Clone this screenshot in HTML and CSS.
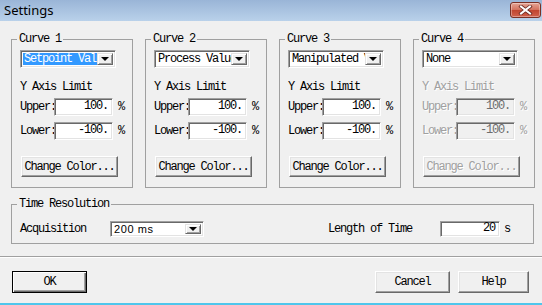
FILE: index.html
```html
<!DOCTYPE html>
<html lang="en">
<head>
  <meta charset="UTF-8" />
  <title>Settings</title>
  <link rel="stylesheet" href="styles.css">
</head>
<body>
  <div class="window">
    <div class="titlebar">
      <span class="title">Settings</span>
      <button class="close-btn" aria-label="Close">
        <svg width="15" height="10" viewBox="0 0 15 10">
          <path d="M3 1.5 L12 8.5 M12 1.5 L3 8.5" stroke="#6b2a22" stroke-width="3.6" stroke-linecap="square"/>
          <path d="M3 1.5 L12 8.5 M12 1.5 L3 8.5" stroke="#fff" stroke-width="2" stroke-linecap="square"/>
        </svg>
      </button>
    </div>

    <div class="content">
      <div class="curves">
        <fieldset class="group curve">
          <legend>Curve 1</legend>
          <div class="combo"><span class="combo-text selected">Setpoint Value</span><span class="combo-arrow"></span></div>
          <div class="axis-title">Y Axis Limit</div>
          <div class="limit-row"><span class="limit-label">Upper:</span><span class="edit">100.</span><span class="unit">%</span></div>
          <div class="limit-row lower"><span class="limit-label">Lower:</span><span class="edit">-100.</span><span class="unit">%</span></div>
          <button class="btn color-btn">Change Color...</button>
        </fieldset>

        <fieldset class="group curve">
          <legend>Curve 2</legend>
          <div class="combo"><span class="combo-text">Process Value</span><span class="combo-arrow"></span></div>
          <div class="axis-title">Y Axis Limit</div>
          <div class="limit-row"><span class="limit-label">Upper:</span><span class="edit">100.</span><span class="unit">%</span></div>
          <div class="limit-row lower"><span class="limit-label">Lower:</span><span class="edit">-100.</span><span class="unit">%</span></div>
          <button class="btn color-btn">Change Color...</button>
        </fieldset>

        <fieldset class="group curve">
          <legend>Curve 3</legend>
          <div class="combo"><span class="combo-text">Manipulated Value</span><span class="combo-arrow"></span></div>
          <div class="axis-title">Y Axis Limit</div>
          <div class="limit-row"><span class="limit-label">Upper:</span><span class="edit">100.</span><span class="unit">%</span></div>
          <div class="limit-row lower"><span class="limit-label">Lower:</span><span class="edit">-100.</span><span class="unit">%</span></div>
          <button class="btn color-btn">Change Color...</button>
        </fieldset>

        <fieldset class="group curve disabled">
          <legend>Curve 4</legend>
          <div class="combo"><span class="combo-text">None</span><span class="combo-arrow"></span></div>
          <div class="axis-title">Y Axis Limit</div>
          <div class="limit-row"><span class="limit-label">Upper:</span><span class="edit">100.</span><span class="unit">%</span></div>
          <div class="limit-row lower"><span class="limit-label">Lower:</span><span class="edit">-100.</span><span class="unit">%</span></div>
          <button class="btn color-btn" disabled>Change Color...</button>
        </fieldset>
      </div>

      <fieldset class="group time">
        <legend>Time Resolution</legend>
        <div class="time-row">
          <span class="time-label">Acquisition</span>
          <div class="combo small"><span class="combo-text sans">200 ms</span><span class="combo-arrow"></span></div>
          <span class="time-label length">Length of Time</span>
          <span class="edit small">20</span>
          <span class="unit">s</span>
        </div>
      </fieldset>
    </div>

    <div class="separator"></div>

    <div class="footer">
      <button class="btn default">OK</button>
      <button class="btn cancel">Cancel</button>
      <button class="btn help">Help</button>
    </div>
  </div>
</body>
</html>
```

FILE: styles.css
```css
* {
  margin: 0;
  padding: 0;
  box-sizing: border-box;
}

body {
  width: 542px;
  height: 305px;
  overflow: hidden;
  background: #f0f0f0;
  color: #000;
  font: 12px "Liberation Mono", monospace;
  letter-spacing: -1.2px;
}

.window {
  height: 305px;
  display: flex;
  flex-direction: column;
  border-bottom: 2px solid #4ec6ec;
}

/* title bar */
.titlebar {
  height: 21px;
  flex-shrink: 0;
  display: flex;
  justify-content: space-between;
  align-items: flex-start;
  padding: 0 1px 0 4px;
  background: linear-gradient(#9ab5d7, #b9d1ea);
}

.title {
  font: 13px "Noto Sans", sans-serif;
  letter-spacing: 0;
  line-height: 20px;
}

.close-btn {
  width: 31px;
  height: 16px;
  margin-top: 2px;
  border: 1px solid #7a3025;
  border-radius: 3px;
  background: linear-gradient(#e5a596, #d2705c 50%, #c0442f 51%, #d0614c);
  box-shadow: inset 0 0 0 1px rgba(255, 255, 255, 0.35);
  display: flex;
  align-items: center;
  justify-content: center;
}

/* content */
.content {
  padding: 12px 0 0 11px;
}

.curves {
  display: flex;
  gap: 12px;
}

.group {
  border: 1px solid #a0a0a0;
  min-width: 0;
}

.group legend {
  margin-left: -3px;
  padding: 0 2px;
  line-height: 12px;
}

.curve {
  width: 122px;
  padding: 5px 8px 10px 8px;
}

/* combo boxes */
.combo {
  width: 96px;
  height: 18px;
  display: flex;
  background: #fff;
  border: 1px solid;
  border-color: #a0a0a0 #fff #fff #a0a0a0;
  box-shadow: inset 1px 1px #696969, inset -1px -1px #e3e3e3;
  padding: 2px;
}

.combo-text {
  flex: 1;
  overflow: hidden;
  white-space: nowrap;
  line-height: 12px;
  padding-left: 1px;
}

.combo-text.selected {
  background: #3399ff;
  color: #fff;
}

.combo-text.sans {
  font: 11px "Liberation Sans", sans-serif;
  letter-spacing: 0.6px;
  line-height: 10px;
}

.combo-arrow {
  width: 16px;
  flex-shrink: 0;
  background: #f0f0f0;
  border: 1px solid;
  border-color: #e3e3e3 #696969 #696969 #e3e3e3;
  box-shadow: inset 1px 1px #fff, inset -1px -1px #a0a0a0;
  display: flex;
  align-items: center;
  justify-content: center;
}

.combo-arrow::after {
  content: "";
  border-left: 4px solid transparent;
  border-right: 4px solid transparent;
  border-top: 4px solid #000;
}

.axis-title {
  margin-top: 13px;
  line-height: 12px;
}

.limit-row {
  display: flex;
  align-items: center;
  margin-top: 5px;
}

.limit-row.lower {
  margin-top: 6px;
}

.limit-label {
  width: 34px;
}

/* edit fields */
.edit {
  width: 60px;
  height: 18px;
  line-height: 14px;
  text-align: right;
  padding-right: 4px;
  background: #fff;
  border: 1px solid;
  border-color: #a0a0a0 #fff #fff #a0a0a0;
  box-shadow: inset 1px 1px #696969, inset -1px -1px #e3e3e3;
}

.unit {
  margin-left: 5px;
}

/* buttons */
.btn {
  font: inherit;
  letter-spacing: inherit;
  color: #000;
  background: #f0f0f0;
  border: 1px solid;
  border-color: #fff #696969 #696969 #fff;
  box-shadow: inset -1px -1px #a0a0a0, inset 1px 1px #e3e3e3;
  height: 22px;
}

.color-btn {
  display: block;
  width: 97px;
  height: 21px;
  margin: 16px 0 0 1px;
}

/* disabled curve */
.disabled .axis-title,
.disabled .limit-label,
.disabled .unit,
.disabled .color-btn {
  color: #a0a0a0;
  text-shadow: 1px 1px #fff;
}

.disabled .edit {
  background: #f0f0f0;
  color: #6d6d6d;
}

/* time resolution */
.time {
  width: 523px;
  margin-top: 10px;
  padding: 11px 8px 6px 8px;
}

.time-row {
  display: flex;
  align-items: center;
}

.time-label {
  width: 90px;
}

.time-label.length {
  width: 112px;
  margin-left: 124px;
}

.combo.small {
  width: 94px;
  height: 16px;
  padding: 2px;
}

.edit.small {
  height: 16px;
  line-height: 12px;
}

.time .unit {
  margin-left: 4px;
}

/* footer */
.separator {
  margin-top: 12px;
  height: 2px;
  border-top: 1px solid #a0a0a0;
  border-bottom: 1px solid #fff;
}

.footer {
  display: flex;
  gap: 8px;
  padding: 13px 13px 0 12px;
}

.footer .btn {
  width: 75px;
}

.btn.default {
  border: 1px solid #000;
  box-shadow: inset 1px 1px #fff, inset -1px -1px #696969, inset -2px -2px #a0a0a0;
  margin-right: auto;
}

.footer .btn.help {
  width: 71px;
}
```
